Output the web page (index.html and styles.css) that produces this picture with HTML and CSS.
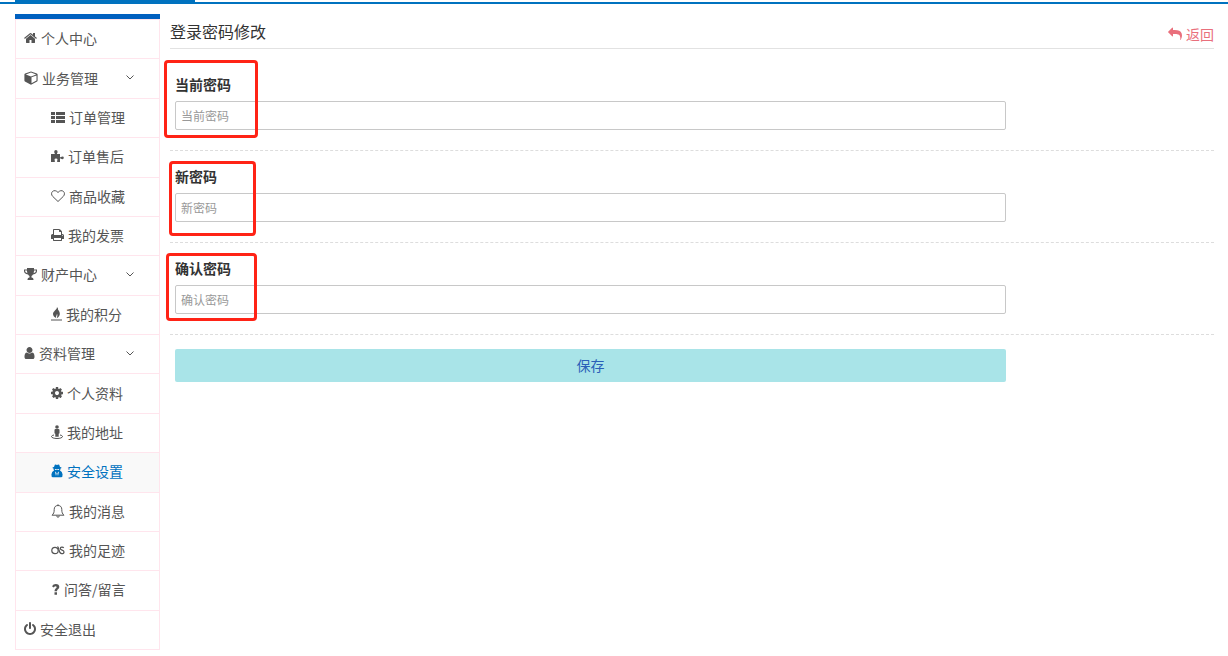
FILE: index.html
```html
<!DOCTYPE html>
<html lang="zh-CN">
<head>
    <meta charset="UTF-8">
    <meta name="viewport" content="width=device-width, initial-scale=1.0">
    <title>登录密码修改</title>
    <link rel="stylesheet" href="styles.css">
</head>
<body>
    <header class="top-nav">
        <div class="top-nav-tab"></div>
    </header>

    <div class="container">
        <nav class="sidebar">
            <ul class="menu">
                <li><a href="#"><svg width="13" height="14" viewBox="64 0 1664 1792"><path d="M1472 992v480q0 26-19 45t-45 19h-384v-384h-256v384h-384q-26 0-45-19t-19-45v-480q0-1 .5-3t.5-3l575-474 575 474q1 2 1 6zm223-69l-62 74q-8 9-21 11h-3q-13 0-21-7l-692-577-692 577q-12 8-24 7-13-2-21-11l-62-74q-8-10-7-23.500t11-21.500l719-599q32-26 76-26t76 26l244 204v-195q0-14 9-23t23-9h192q14 0 23 9t9 23v408l219 182q10 8 11 21.500t-7 23.500z"/></svg>个人中心</a></li>
                <li><a href="#"><svg width="14" height="14" viewBox="0 0 14 14"><path fill-rule="evenodd" d="M7 .4l5.900 2.200q.7.300.7 1v6q0 .6-.5.900L7.500 13.500q-.5.300-1 0L.9 10.500q-.5-.3-.5-.9v-6q0-.7.700-1zM7 1.600L1.800 3.500 7 5.400l5.200-1.900zM7.500 12.200l5-2.700v-5L7.500 6.300z"/></svg>业务管理<svg class="arrow" width="8" height="5" viewBox="0 0 8 5"><path d="M.5.500L4 4 7.500.5"/></svg></a></li>
                <li class="sub"><a href="#"><svg width="14" height="14" viewBox="0 0 14 14"><path d="M0 2h4v3H0zM5 2h9v3H5zM0 6h4v3H0zM5 6h9v3H5zM0 10h4v3H0zM5 10h9v3H5z"/></svg>订单管理</a></li>
                <li class="sub"><a href="#"><svg width="13" height="14" viewBox="0 0 13 14"><path d="M0 5h3.500q.5 0 .3-.7-.6-.6-.6-1.600Q3.200.9 4.900.9t1.700 1.800q0 1-.6 1.600-.2.700.3.700H9v2.700q0 .7.600.5 1-.8 1.900-.8 1.300 0 1.300 1.400t-1.300 1.400q-.9 0-1.900-.8-.6-.2-.6.600V13H6.400q-.5-.5-.3-1.200.4-.5.400-1Q6.500 9.500 5 9.500t-1.500 1.300q0 .5.400 1 .2.700-.3 1.200H0z"/></svg>订单售后</a></li>
                <li class="sub"><a href="#"><svg width="14" height="14" viewBox="0 0 14 14"><path class="line" d="M7 12.500L1.700 7.400C.2 5.900.2 3.700 1.500 2.500 3 1.100 5.300 1.400 7 3.500 8.700 1.400 11 1.100 12.500 2.500c1.300 1.200 1.300 3.400-.2 4.900z"/></svg>商品收藏</a></li>
                <li class="sub"><a href="#"><svg width="13" height="14" viewBox="64 0 1664 1792"><path d="M448 1536h896v-256h-896v256zm0-640h896v-384h-160q-40 0-68-28t-28-68v-160h-640v640zm1152 64q0-26-19-45t-45-19-45 19-19 45 19 45 45 19 45-19 19-45zm128 0v416q0 13-9.500 22.500t-22.500 9.500h-224v160q0 40-28 68t-68 28h-960q-40 0-68-28t-28-68v-160h-224q-13 0-22.500-9.500t-9.500-22.500v-416q0-79 56.500-135.500t135.500-56.500h64v-544q0-40 28-68t68-28h672q40 0 88 20t76 48l152 152q28 28 48 76t20 88v256h64q79 0 135.500 56.500t56.500 135.500z"/></svg>我的发票</a></li>
                <li><a href="#"><svg width="13" height="14" viewBox="0 0 13 14"><path fill-rule="evenodd" d="M3 1h7v1.500h3V4q0 2.800-4 3.500-.8 1-1.500 1.500v1.500q2 .2 2 2v.5h-6v-.5q0-1.800 2-2V9Q4.800 8.500 4 7.500 0 6.800 0 4V2.500h3zM1 3.500V4q.1 1.500 2.400 2.300Q3 5 3 3.500zm9 0q0 1.500-.4 2.800Q11.900 5.500 12 4v-.5z"/></svg>财产中心<svg class="arrow" width="8" height="5" viewBox="0 0 8 5"><path d="M.5.500L4 4 7.500.5"/></svg></a></li>
                <li class="sub"><a href="#"><svg width="11" height="14" viewBox="0 0 11 14"><path d="M0 12.500h11v1H0zM5.900 0C6.500 2.600 2 4 2 7.100c0 2 1.500 3.300 3 4C4.600 9.600 5.800 8.700 6 6.800 6.700 8 6.300 9.700 5.700 11.200 8 10 9 8.200 8.800 6.500 8.600 4.500 7.800 4.600 7.900 3c-.8.400-1 1-1 1.600C7.100 2.800 7.500 1.100 5.900 0z"/></svg>我的积分</a></li>
                <li><a href="#"><svg width="11" height="14" viewBox="192 0 1408 1792"><path d="M1536 1399q0 109-62.500 187t-150.500 78h-854q-88 0-150.500-78t-62.500-187q0-85 8.500-160.500t31.500-152 58.500-131 94-89 134.500-34.500q131 128 313 128t313-128q76 0 134.500 34.500t94 89 58.500 131 31.500 152 8.500 160.500zm-256-887q0 159-112.500 271.500t-271.500 112.500-271.500-112.500-112.500-271.500 112.500-271.500 271.500-112.500 271.500 112.500 112.500 271.500z"/></svg>资料管理<svg class="arrow" width="8" height="5" viewBox="0 0 8 5"><path d="M.5.500L4 4 7.500.5"/></svg></a></li>
                <li class="sub"><a href="#"><svg width="12" height="14" viewBox="128 0 1536 1792"><path d="M1152 896q0-106-75-181t-181-75-181 75-75 181 75 181 181 75 181-75 75-181zm512-109v222q0 12-8 23t-20 13l-185 28q-19 54-39 91 35 50 107 138 10 12 10 25t-9 23q-27 37-99 108t-94 71q-12 0-26-9l-138-108q-44 23-91 38-16 136-29 186-7 28-36 28h-222q-14 0-24.500-8.500t-11.500-21.500l-28-184q-49-16-90-37l-141 107q-10 9-25 9-14 0-25-11-126-114-165-168-7-10-7-23 0-12 8-23 15-21 51-66.500t54-70.500q-27-50-41-99l-183-27q-13-2-21-12.500t-8-23.500v-222q0-12 8-23t19-13l186-28q14-46 39-92-40-57-107-138-10-12-10-24 0-10 9-23 26-36 98.500-107.500t94.500-71.500q13 0 26 10l138 107q44-23 91-38 16-136 29-186 7-28 36-28h222q14 0 24.500 8.500t11.500 21.500l28 184q49 16 90 37l142-107q9-9 24-9 13 0 25 10 129 119 165 170 7 8 7 22 0 12-8 23-15 21-51 66.500t-54 70.500q26 50 41 98l183 28q13 2 21 12.500t8 23.500z"/></svg>个人资料</a></li>
                <li class="sub"><a href="#"><svg width="12" height="14" viewBox="0 0 12 14"><circle cx="6" cy="2" r="1.800"/><path d="M4.500 4h3q1 0 1 1v3q0 .8-.8.800v3H4.300v-3q-.8 0-.8-.8V5q0-1 1-1z"/><path class="line" d="M3 10C1.500 10.300.5 10.800.5 11.500c0 1.200 2.500 2 5.500 2s5.500-.8 5.500-2c0-.7-1-1.200-2.500-1.500"/></svg>我的地址</a></li>
                <li class="sub active"><a href="#"><svg width="12" height="14" viewBox="0 0 12 14"><path fill-rule="evenodd" d="M3.800.7Q4.800.3 6 .9 7.200.3 8.200.7L9 3q1.500.3 1.500.8T9.500 4.600Q9.500 5.700 9 6.500q2.300.9 2.600 4 .2 2.700-1.600 2.700H2Q.2 13.200.4 10.500.7 7.400 3 6.500 2.500 5.700 2.500 4.600 1.500 4.300 1.500 3.800T3 3zM3.700 5q.3 1.100 1.100 1 .8 0 1.200-.8.400.8 1.200.8.800.1 1.100-1zM4 7.500l1 4.500.6-2.500L5 8.300zm4 0l-1 .8-.6 1.200L7 12z"/></svg>安全设置</a></li>
                <li class="sub"><a href="#"><svg width="14" height="14" viewBox="0 0 14 14"><path class="line" d="M7 .3v1M1 11.200C2.700 9.800 3.200 8.300 3.200 5.500 3.200 3 4.500 1.500 7 1.500s3.800 1.500 3.800 4c0 2.800.5 4.300 2.200 5.700z"/><path class="line" d="M5.700 11.700q0 1.500 1.300 1.500t1.300-1.500"/></svg>我的消息</a></li>
                <li class="sub"><a href="#"><svg width="14" height="14" viewBox="0 0 14 14"><circle class="line bold" cx="4" cy="7.500" r="3.200"/><path class="line bold" d="M6.500 3.500C8.500 5 7.500 10.700 10.700 10.700c1.400 0 2.300-.7 2.300-1.800C13 6.700 9.300 7.500 9.300 5.500 9.300 3.700 12 3.600 12.700 5"/></svg>我的足迹</a></li>
                <li class="sub"><a href="#"><svg width="9" height="14" viewBox="0 0 9 14"><path d="M3.500 10.300H6v2.400H3.500zM1 4.300Q2.200 1.900 4.800 1.900q3.500 0 3.500 3 0 1.500-1.300 2.400Q6 8 6 9.300H3.500Q3.500 7.500 4.600 6.600 5.600 5.900 5.600 5.200 5.600 4.200 4.600 4.200 3.700 4.200 2.700 5.600z"/></svg>问答/留言</a></li>
                <li><a href="#"><svg width="12" height="14" viewBox="128 0 1536 1792"><path d="M1664 896q0 156-61 298t-164 245-245 164-298 61-298-61-245-164-164-245-61-298q0-182 80.500-343t226.500-270q43-32 95.500-25t83.500 50q32 42 24.500 94.500t-49.500 84.500q-98 74-151.500 181t-53.500 228q0 104 40.500 198.500t109.500 163.500 163.500 109.500 198.500 40.500 198.500-40.500 163.500-109.500 109.500-163.500 40.500-198.500q0-121-53.500-228t-151.500-181q-42-32-49.500-84.500t24.500-94.500q31-43 84-50t95 25q146 109 226.500 270t80.500 343zm-640-768v640q0 52-38 90t-90 38-90-38-38-90v-640q0-52 38-90t90-38 90 38 38 90z"/></svg>安全退出</a></li>
            </ul>
        </nav>

        <main class="content">
            <div class="page-header">
                <h1>登录密码修改</h1>
                <a href="#" class="back"><svg width="14" height="14" viewBox="0 0 1792 1792"><path d="M1792 1120q0 166-127 451-3 7-10.500 24t-13.500 30-13 22q-12 17-28 17-15 0-23.500-10t-8.500-25q0-9 2.500-26.500t2.500-23.500q5-68 5-123 0-101-17.500-181t-48.500-138.500-80-101-105.500-69.500-133-42.500-154-21.500-175.500-6h-224v256q0 26-19 45t-45 19-45-19l-512-512q-19-19-19-45t19-45l512-512q19-19 45-19t45 19 19 45v256h224q713 0 875 403 53 134 53 333z"/></svg>返回</a>
            </div>

            <form class="password-form">
                <div class="form-group">
                    <label for="currentPwd">当前密码</label>
                    <input type="password" id="currentPwd" placeholder="当前密码">
                    <span class="mark mark-current"></span>
                </div>
                <div class="form-group">
                    <label for="newPwd">新密码</label>
                    <input type="password" id="newPwd" placeholder="新密码">
                    <span class="mark mark-new"></span>
                </div>
                <div class="form-group">
                    <label for="confirmPwd">确认密码</label>
                    <input type="password" id="confirmPwd" placeholder="确认密码">
                    <span class="mark mark-confirm"></span>
                </div>
                <div class="form-submit">
                    <button type="submit">保存</button>
                </div>
            </form>
        </main>
    </div>
</body>
</html>
```

FILE: styles.css
```css
* {
    box-sizing: border-box;
}
body {
    margin: 0;
    font-family: "Noto Sans CJK SC", sans-serif;
    font-size: 14px;
    line-height: 20px;
    color: #333;
    background-color: #fff;
}
a {
    color: inherit;
    text-decoration: none;
}
svg {
    flex: none;
    fill: currentColor;
}
.line {
    fill: none;
    stroke: currentColor;
    stroke-width: 1;
}
.bold {
    stroke-width: 1.2;
}

/* Top navigation */
.top-nav {
    padding-left: 15px;
    border-bottom: 2px solid #0072bf;
}
.top-nav-tab {
    width: 180px;
    height: 2px;
    background-color: #0072bf;
}
.container {
    display: flex;
    align-items: flex-start;
    gap: 10px;
    padding: 10px 14px 0 15px;
}

/* Sidebar */
.sidebar {
    flex: none;
    width: 145px;
    border-top: 5px solid #0060bf;
}
.menu {
    display: grid;
    grid-auto-rows: 1fr;
    min-height: 631px;
    margin: 0;
    padding: 0;
    list-style: none;
    border: 1px solid #ffe5ed;
    border-bottom: none;
}
.menu li {
    display: flex;
    border-bottom: 1px solid #ffe5ed;
}
.menu a {
    flex: 1;
    display: flex;
    align-items: center;
    gap: 4px;
    padding: 0 25px 2px 8px;
    color: #555;
}
.menu .sub a {
    padding: 0 0 2px 35px;
}
.menu .active a {
    color: #0072bf;
    background-color: #f9f9f9;
}
.menu a:hover {
    color: #0072bf;
}
.arrow {
    margin-left: auto;
    fill: none;
    stroke: currentColor;
}

/* Content */
.content {
    flex: 1;
    min-width: 0;
}
.page-header {
    display: flex;
    justify-content: space-between;
    align-items: flex-end;
    padding: 5px 0 4px;
    border-bottom: 1px solid #e2e2e2;
}
.page-header h1 {
    margin: 0;
    padding-bottom: 1px;
    font-size: 16px;
    line-height: 24px;
    font-weight: 400;
}
.back {
    display: flex;
    align-items: center;
    gap: 4px;
    color: #e96f7c;
}
.password-form {
    padding-top: 10px;
}
.form-group {
    position: relative;
    padding: 15px 0 20px 5px;
    border-bottom: 1px dashed #ddd;
}
.form-group label {
    display: block;
    margin-bottom: 7px;
    font-weight: 700;
}
.form-group input {
    display: block;
    width: 80%;
    height: 29px;
    padding: 0 5px 1px;
    border: 1px solid #c8c8c8;
    border-radius: 2px;
    font-family: inherit;
    font-size: 12px;
    color: #333;
}
.form-group input::placeholder {
    color: #999;
}
.form-group input:focus {
    outline: none;
    border-color: #0072bf;
}
.form-submit {
    padding: 14px 0 0 5px;
}
.form-submit button {
    width: 80%;
    height: 33px;
    padding: 0 0 2px;
    border: none;
    border-radius: 2px;
    font-family: inherit;
    font-size: 14px;
    color: #2b5fb8;
    background-color: #a9e4e8;
    cursor: pointer;
}

/* Red outlines over the field names */
.mark {
    position: absolute;
    border: 3px solid #ff2316;
    border-radius: 4px;
    pointer-events: none;
}
.mark-current {
    top: 1px;
    left: -6px;
    width: 94px;
    height: 78px;
}
.mark-new {
    top: 10px;
    left: -1px;
    width: 87px;
    height: 75px;
}
.mark-confirm {
    top: 10px;
    left: -4px;
    width: 91px;
    height: 68px;
}

@media (max-width: 480px) {
    .container {
        flex-direction: column;
    }
    .sidebar, .content {
        width: 100%;
    }
}
```
